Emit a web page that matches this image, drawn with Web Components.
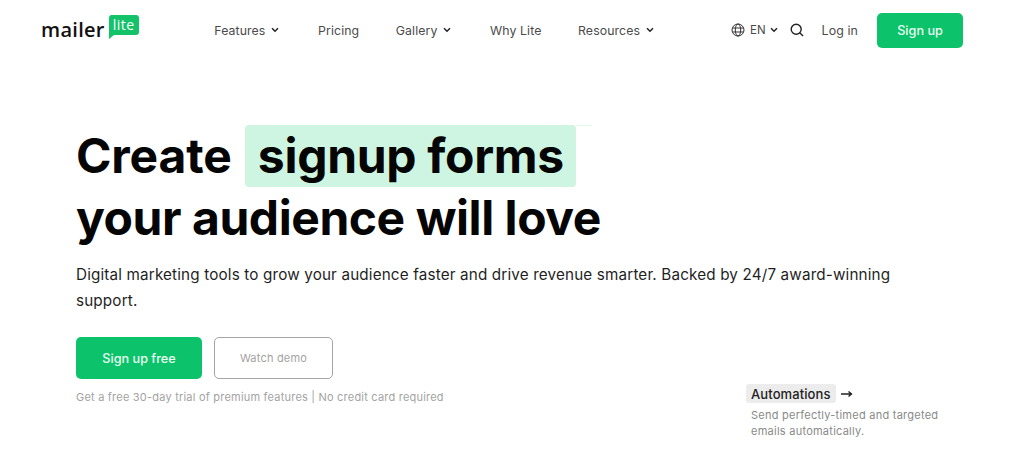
<!DOCTYPE html>
<html lang="en">
<head>
<meta charset="utf-8">
<title>MailerLite</title>
<style>
  html, body { margin: 0; padding: 0; background: #fff; overflow: hidden; height: 454px; }
  body { font-family: Inter, "Liberation Sans", sans-serif; color: #09090b; }
</style>
</head>
<body>
<ml-header></ml-header>
<ml-hero></ml-hero>

<script>
// Small dropdown nav link with a chevron
class MlNavItem extends HTMLElement {
  constructor() {
    super();
    this.attachShadow({ mode: 'open' });
    const caret = this.hasAttribute('caret')
      ? `<svg width="8" height="6" viewBox="0 0 8 6"><path d="M1 1.2 4 4.2 7 1.2" fill="none" stroke="#222" stroke-width="1.5"/></svg>`
      : '';
    this.shadowRoot.innerHTML = `
      <style>
        :host { display: inline-flex; align-items: center; gap: 6px; font-size: 12.3px; color: #4b4b4b; letter-spacing: .1px; }
        :host([caret]) { margin-right: 2px; }
      </style>
      <slot></slot>${caret}
    `;
  }
}
customElements.define('ml-nav-item', MlNavItem);

class MlLogo extends HTMLElement {
  constructor() {
    super();
    this.attachShadow({ mode: 'open' });
    this.shadowRoot.innerHTML = `
      <style>
        :host { display: flex; align-items: flex-end; gap: 3px; height: 26px; margin-top: -7px; }
        .word { font: 600 20px/20px "Open Sans", sans-serif; color: #111; letter-spacing: .3px; }
        .bubble { position: relative; width: 31px; height: 24px; margin-bottom: 1px; }
        .bubble svg { position: absolute; left: 0; top: 0; }
        .bubble span { position: absolute; left: 5px; top: 1px; font: 500 14px/17px "Open Sans", sans-serif; color: #fff; letter-spacing: .5px; }
      </style>
      <span class="word">mailer</span>
      <span class="bubble">
        <svg width="31" height="24" viewBox="0 0 31 24"><path d="M3 0H28a3 3 0 0 1 3 3V17a3 3 0 0 1-3 3H6L1 24V3a3 3 0 0 1 2-3Z" fill="#14c26a"/></svg>
        <span>lite</span>
      </span>
    `;
  }
}
customElements.define('ml-logo', MlLogo);

class MlHeader extends HTMLElement {
  constructor() {
    super();
    this.attachShadow({ mode: 'open' });
    this.shadowRoot.innerHTML = `
      <style>
        :host { display: block; height: 60px; }
        .bar { display: flex; align-items: center; height: 60px; padding: 0 61px 0 41px; }
        .links { display: flex; align-items: center; gap: 36.6px; margin-left: 75.5px; }
        .right { display: flex; align-items: center; margin-left: auto; }
        .lang { display: flex; align-items: center; gap: 5px; font-size: 11.5px; color: #4b4b4b; }
        .lang .chev { margin-left: -1px; }
        .search { display: flex; margin-left: 12px; }
        .login { margin-left: 18px; font-size: 12.4px; color: #4b4b4b; letter-spacing: .1px; }
        .signup { margin: 1px 0 0 19px; width: 86px; height: 35px; border-radius: 5px; background: #0cc26a;
                  color: #eafff3; font-size: 12.7px; font-weight: 500; display: flex; align-items: center; justify-content: center; }
      </style>
      <div class="bar">
        <ml-logo></ml-logo>
        <div class="links">
          <ml-nav-item caret>Features</ml-nav-item>
          <ml-nav-item>Pricing</ml-nav-item>
          <ml-nav-item caret>Gallery</ml-nav-item>
          <ml-nav-item>Why Lite</ml-nav-item>
          <ml-nav-item caret>Resources</ml-nav-item>
        </div>
        <div class="right">
          <div class="lang">
            <svg width="14" height="14" viewBox="0 0 14 14" fill="none" stroke="#333" stroke-width="1"><circle cx="7" cy="7" r="6"/><ellipse cx="7" cy="7" rx="2.7" ry="6"/><path d="M1.4 5H12.6M1.4 9H12.6"/></svg>
            <span>EN</span>
            <svg class="chev" width="8" height="6" viewBox="0 0 8 6"><path d="M1 1.2 4 4.2 7 1.2" fill="none" stroke="#222" stroke-width="1.5"/></svg>
          </div>
          <span class="search"><svg width="14" height="14" viewBox="0 0 14 14" fill="none" stroke="#222" stroke-width="1.4"><circle cx="6.2" cy="6.2" r="5"/><path d="M9.8 9.8 13 13"/></svg></span>
          <span class="login">Log in</span>
          <span class="signup">Sign up</span>
        </div>
      </div>
    `;
  }
}
customElements.define('ml-header', MlHeader);

class MlButton extends HTMLElement {
  constructor() {
    super();
    this.attachShadow({ mode: 'open' });
    this.shadowRoot.innerHTML = `
      <style>
        :host { display: flex; align-items: center; justify-content: center; box-sizing: border-box; height: 42px; border-radius: 5px; font-size: 12.7px; }
        :host([variant="primary"]) { width: 126px; background: #0cc26a; color: #eafff3; font-weight: 500; }
        :host([variant="outline"]) { width: 119px; border: 1px solid #a5a5a5; color: #a3a3a3; font-size: 11px; letter-spacing: .2px; }
      </style>
      <slot></slot>
    `;
  }
}
customElements.define('ml-button', MlButton);

class MlFeatureCard extends HTMLElement {
  constructor() {
    super();
    this.attachShadow({ mode: 'open' });
    this.shadowRoot.innerHTML = `
      <style>
        :host { display: block; width: 200px; }
        .top { display: flex; align-items: center; gap: 5px; }
        .tag { background: #ececec; border-radius: 3px; padding: 0 5px; height: 19px; display: flex; align-items: center;
               font-size: 13px; font-weight: 500; color: #222; letter-spacing: .1px; }
        svg { stroke-width: 1.4; }
        p { margin: 4px 0 0 5px; font-size: 11px; line-height: 16px; color: #8a8a8a; letter-spacing: .25px; }
      </style>
      <div class="top">
        <span class="tag"><slot name="title"></slot></span>
        <svg width="12" height="8" viewBox="0 0 12 8" fill="none" stroke="#222"><path d="M0 4H10M7.5 1.5 10.5 4 7.5 6.5"/></svg>
      </div>
      <p><slot></slot></p>
    `;
  }
}
customElements.define('ml-feature-card', MlFeatureCard);

class MlHero extends HTMLElement {
  constructor() {
    super();
    this.attachShadow({ mode: 'open' });
    this.shadowRoot.innerHTML = `
      <style>
        :host { display: block; padding: 65px 78px 0 76px; }
        h1 { margin: 0; font-size: 48px; line-height: 62px; font-weight: 700; color: #050505; letter-spacing: -.45px; }
        .first { letter-spacing: -.15px; }
        .mark { position: relative; display: inline-block; margin-left: 2px; padding: 0 12px 0 13px; background: #cdf5e1; border-radius: 4px; letter-spacing: -.3px; }
        .mark::after { content: ""; position: absolute; left: 100%; top: 0; width: 16px; height: 1px; background: #e4f8ee; }
        .lead { margin: 13px 0 0; font-size: 15.25px; line-height: 26px; color: #1f1f1f; letter-spacing: .15px; }
        .row { display: flex; justify-content: space-between; margin-top: 23px; }
        .buttons { display: flex; gap: 12px; }
        .note { margin-top: 11px; font-size: 11px; line-height: 14px; color: #a3a3a3; letter-spacing: .21px; }
        ml-feature-card { margin-top: 47px; }
      </style>
      <h1><span class="first">Create <span class="mark">signup forms</span></span><br>your audience will love</h1>
      <p class="lead">Digital marketing tools to grow your audience faster and drive revenue smarter. Backed by 24/7 award-winning support.</p>
      <div class="row">
        <div>
          <div class="buttons">
            <ml-button variant="primary">Sign up free</ml-button>
            <ml-button variant="outline">Watch demo</ml-button>
          </div>
          <div class="note">Get a free 30-day trial of premium features | No credit card required</div>
        </div>
        <ml-feature-card>
          <span slot="title">Automations</span>
          Send perfectly-timed and targeted emails automatically.
        </ml-feature-card>
      </div>
    `;
  }
}
customElements.define('ml-hero', MlHero);
</script>
</body>
</html>
